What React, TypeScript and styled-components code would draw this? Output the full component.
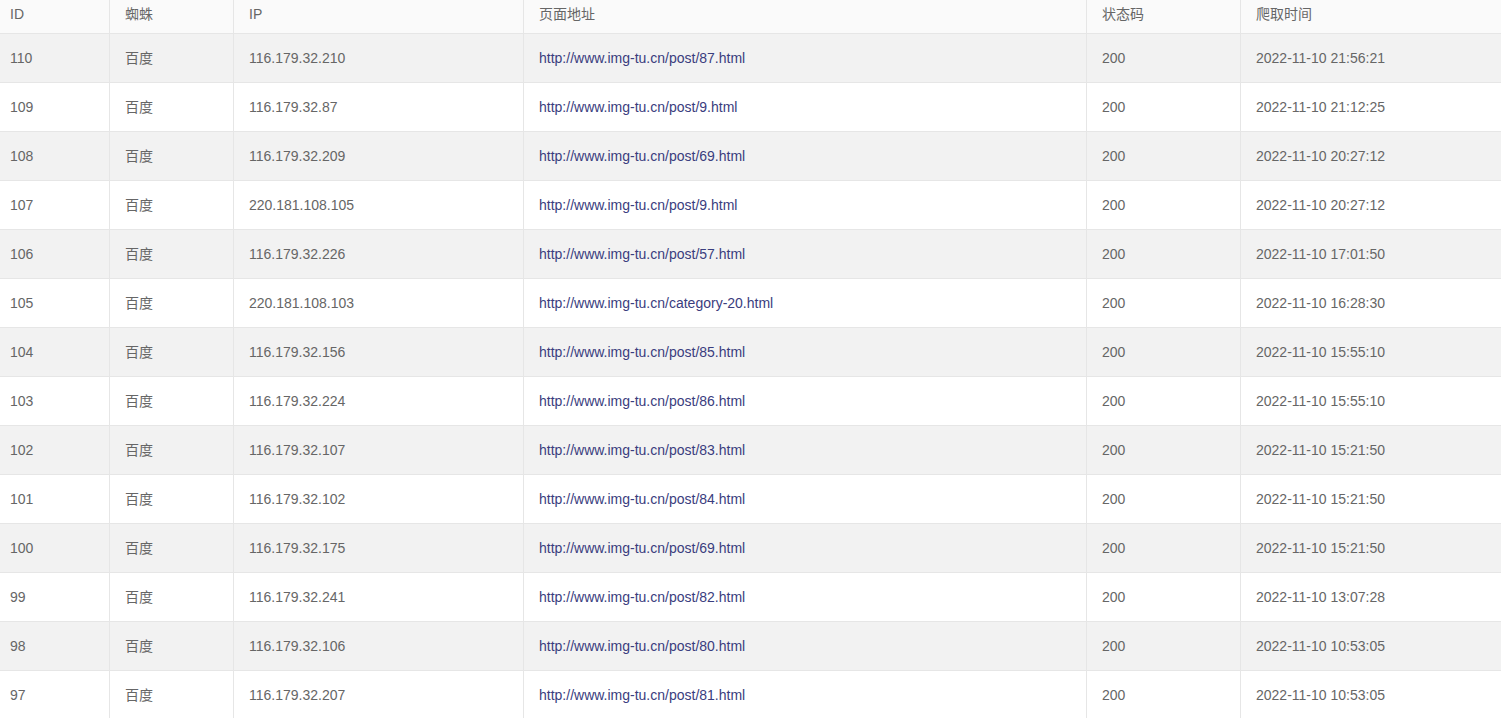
import React from 'react';
import styled, { createGlobalStyle } from 'styled-components';

const GlobalStyle = createGlobalStyle`
  html, body {
    margin: 0;
    padding: 0;
    overflow: hidden;
    background: #fff;
  }
  body {
    font-family: 'Liberation Sans', 'Noto Sans CJK SC', Arial, sans-serif;
    font-size: 14px;
    color: #666;
  }
`;

const Table = styled.div`
  width: 100%;
`;

const Row = styled.div<{ $striped?: boolean; $head?: boolean }>`
  display: grid;
  grid-template-columns: 110px 124px 290px 563px 154px 1fr;
  border-bottom: 1px solid #e6e6e6;
  background: ${(p) => (p.$head ? '#fafafa' : p.$striped ? '#f2f2f2' : '#fff')};
`;

const Cell = styled.div<{ $head?: boolean }>`
  box-sizing: border-box;
  padding: ${(p) => (p.$head ? '4px 15px 9px' : '14px 15px')};
  line-height: 20px;
  border-right: 1px solid #e6e6e6;
  white-space: nowrap;
  overflow: hidden;

  &:first-child {
    padding-left: 10px;
  }
  &:last-child {
    border-right: none;
  }
`;

const Link = styled.a`
  color: #3a3d7e;
  text-decoration: none;
`;

const heads = ['ID', '蜘蛛', 'IP', '页面地址', '状态码', '爬取时间'];

const rows: [number, string, string, string][] = [
  [110, '116.179.32.210', 'post/87.html', '21:56:21'],
  [109, '116.179.32.87', 'post/9.html', '21:12:25'],
  [108, '116.179.32.209', 'post/69.html', '20:27:12'],
  [107, '220.181.108.105', 'post/9.html', '20:27:12'],
  [106, '116.179.32.226', 'post/57.html', '17:01:50'],
  [105, '220.181.108.103', 'category-20.html', '16:28:30'],
  [104, '116.179.32.156', 'post/85.html', '15:55:10'],
  [103, '116.179.32.224', 'post/86.html', '15:55:10'],
  [102, '116.179.32.107', 'post/83.html', '15:21:50'],
  [101, '116.179.32.102', 'post/84.html', '15:21:50'],
  [100, '116.179.32.175', 'post/69.html', '15:21:50'],
  [99, '116.179.32.241', 'post/82.html', '13:07:28'],
  [98, '116.179.32.106', 'post/80.html', '10:53:05'],
  [97, '116.179.32.207', 'post/81.html', '10:53:05'],
];

export default function App() {
  return (
    <>
      <GlobalStyle />
      <Table>
        <Row $head>
          {heads.map((h) => (
            <Cell $head key={h}>
              {h}
            </Cell>
          ))}
        </Row>
        {rows.map(([id, ip, path, time], i) => {
          const url = `http://www.img-tu.cn/${path}`;
          return (
            <Row key={id} $striped={i % 2 === 0}>
              <Cell>{id}</Cell>
              <Cell>百度</Cell>
              <Cell>{ip}</Cell>
              <Cell>
                <Link href={url}>{url}</Link>
              </Cell>
              <Cell>200</Cell>
              <Cell>2022-11-10 {time}</Cell>
            </Row>
          );
        })}
      </Table>
    </>
  );
}
